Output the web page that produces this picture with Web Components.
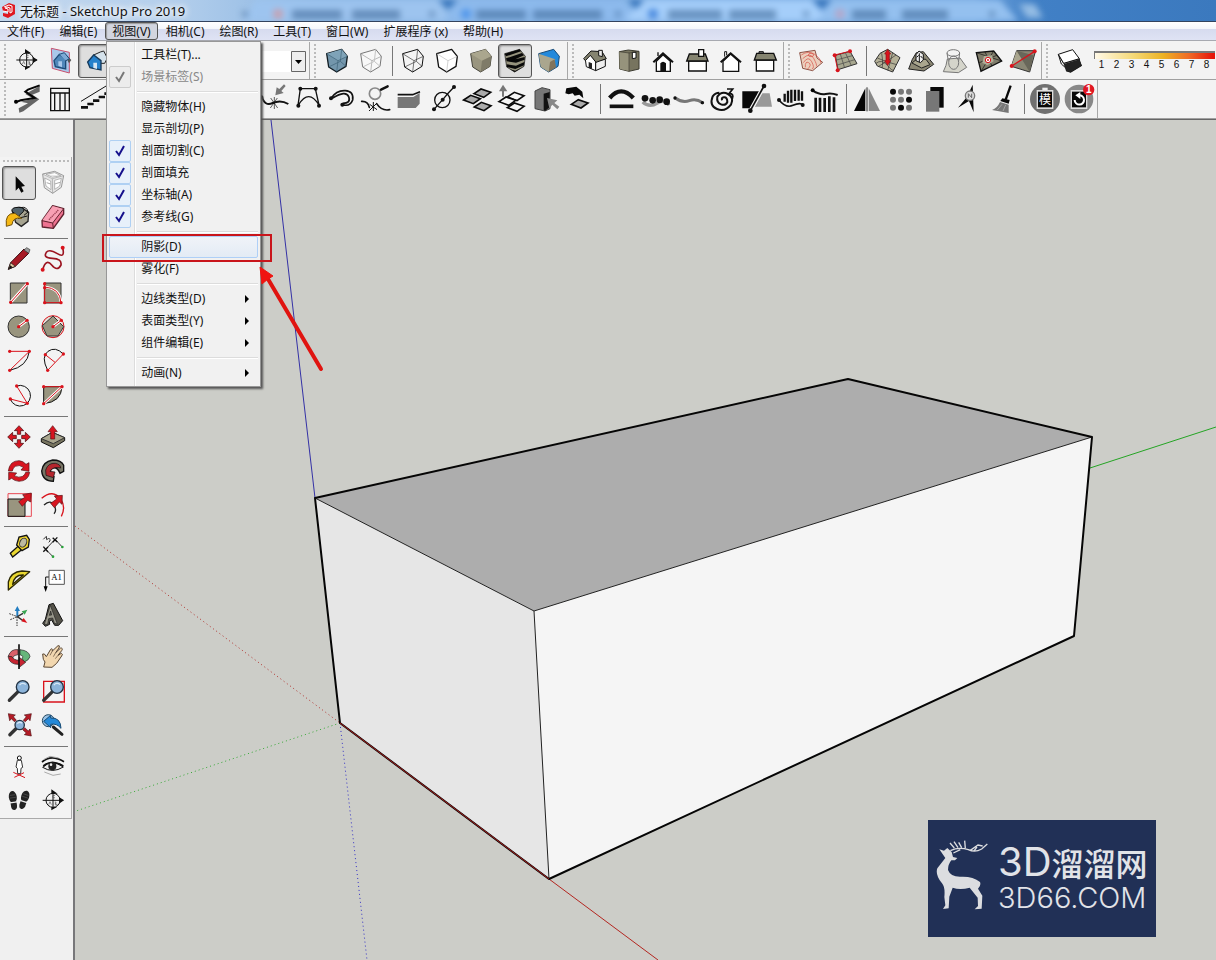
<!DOCTYPE html>
<html lang="zh-CN">
<head>
<meta charset="utf-8">
<meta name="viewport" content="width=device-width, initial-scale=1">
<title>无标题 - SketchUp Pro 2019</title>
<style>
html,body{height:100%}
body{margin:0;font:12px/18px "Noto Sans","Noto Sans CJK SC",sans-serif;color:#111;background:#f0f0f0}
</style>
</head>
<body>
<sketch-app></sketch-app>
<script>
/* ---------- icon library: [origin x, origin y, markup], each on a 102-unit square ---------- */
const K='stroke="#111" ', R='#d9131c', S='#99957f';
const dots=(pts,r=5,c=R)=>pts.map(p=>`<circle cx="${p[0]}" cy="${p[1]}" r="${r}" fill="${c}"/>`).join('');
const compass=(x,y)=>`<g fill="none" ${K} stroke-width="3"><circle cx="${x}" cy="${y}" r="21"/><path d="M${x-31} ${y}H${x+31}M${x} ${y-21}V${y+22}" stroke-width="3"/></g><path d="M${x-5} ${y-20}V${y-33}L${x+14} ${y-20}M${x+18} ${y-10} ${x+33} ${y} ${x+18} ${y+10}M${x-5} ${y+20}V${y+30}L${x+12} ${y+20}" fill="#111"/><path d="M${x-13} ${y+13}l4-9 4 9M${x+7} ${y+4}v10h6q-2-4-6-5q5-2 0-5M${x+6} ${y-14}q-7-3-7 3t7 3" fill="none" stroke="#555" stroke-width="2"/>`;
const shell='M20 29 65 16 82 37 78 67 50 84 26 69Z';
const edges='M20 29 54 50 82 37M54 50 50 84';
const hiddenEdges='M65 16 61 52 26 69M61 52 78 67';
const lens=(x,y,r)=>`<path d="M${x-r*.8} ${y+r*.8} ${x-r*2.1} ${y+r*2.1}" stroke="#333" stroke-width="10" stroke-linecap="round"/><circle cx="${x}" cy="${y}" r="${r}" fill="#8cb4da" stroke="#234" stroke-width="4"/><path d="M${x-r*.5} ${y-r*.3}q${r*.4}-${r*.5} ${r}-${r*.1}" stroke="#d7e8f6" stroke-width="4" fill="none"/>`;
const tile=(x,y,f='#aaa')=>`<path d="M${x-25} ${y+2} ${x-4} ${y-12} ${x+25} ${y-2} ${x+4} ${y+13}Z" fill="${f}" stroke="#0a0a0a" stroke-width="5"/>`;
const shoe=(x,y,a)=>`<g transform="translate(${x} ${y}) rotate(${a})"><ellipse cx="0" cy="-12" rx="12" ry="18" fill="#222"/><path d="M-9 3H9V16Q8 27 0 27T-9 16Z" fill="#222"/><path d="M-11 4H11" stroke="#eee" stroke-width="4"/><path d="M-8-18H8M-9-10H9" stroke="#555" stroke-width="2"/></g>`;
const mesh='M854 184 870 160 893 148 930 173 908 216 862 198Z';
const ICONS={
 section:[30,132,compass(80,180)],
 plane:[132,132,`<path d="M154 145 208 157V219L157 205Z" fill="#a9c8ea" stroke="#c8506e" stroke-width="3"/><path d="M193 163 202 168 214 180 207 190Z" fill="#555"/><path d="M162 182 178 163 197 176V207L166 200Z" fill="#4f87ba" stroke="#1b4a76" stroke-width="4"/><path d="M178 163 193 158 208 176 198 182" fill="#7daad6" stroke="#1b4a76" stroke-width="3"/><path d="M175 197V184H186V202" fill="#a9c8ea"/>`],
 cut:[234,132,`<path d="M281 165 301 156 311 153 322 174 314 190 301 190Z" fill="#d5e2eb" stroke="#222" stroke-width="3"/><path d="M263 186 281 165 303 182V210L270 203Z" fill="#2581cc" stroke="#153a5c" stroke-width="4"/><path d="M280 204V188H291V207" fill="#d5e6f4"/>`],
 fillcut:[0,0,`<path d="${shell}" fill="#ccc" ${K} stroke-width="3"/>`],
 xray:[0,0,`<path d="${shell}" fill="#7396ac" stroke="#111c22" stroke-width="4" stroke-linejoin="round"/><path d="M20 29 65 16 82 37 54 50Z" fill="#7fa3b8"/><path d="${edges}${hiddenEdges}" fill="none" stroke="#3d6075" stroke-width="2"/>`],
 back:[0,0,`<path d="${shell}" fill="#f8f8f8" stroke="#777" stroke-width="3" stroke-linejoin="round"/><path d="${edges}" fill="none" stroke="#999" stroke-width="2"/><path d="${hiddenEdges}" fill="none" stroke="#c4c4c4" stroke-width="3"/>`],
 wire:[0,0,`<path d="${shell}" fill="none" ${K} stroke-width="3"/><path d="${edges}${hiddenEdges}" fill="none" stroke="#333" stroke-width="2"/>`],
 hidden:[0,0,`<path d="${shell}" fill="#fff" ${K} stroke-width="4" stroke-linejoin="round"/><path d="${edges}" fill="none" stroke="#bbb" stroke-width="2"/>`],
 shaded:[0,0,`<path d="${shell}" fill="${S}" stroke="#45443b" stroke-width="3"/><path d="M20 29 65 16 82 37 54 50Z" fill="#aaa68e"/><path d="M54 50 82 37 78 67 50 84Z" fill="#7f7b68"/>`],
 textured:[0,0,`<path d="${shell}" fill="#96937d" stroke="#111" stroke-width="2"/><path d="M20 29 65 16 69 22 24 37ZM24 43 72 27 78 34 52 46 80 39 80 47 54 56 26 52ZM26 61 54 65 79 54 78 64 52 75 27 69ZM36 76 52 80 77 68 50 84Z" fill="#080808"/>`],
 mono:[0,0,`<path d="${shell}" fill="#2389db" stroke="#174a76" stroke-width="3"/><path d="M20 29 70 46 50 84 26 69Z" fill="#aaa68e"/><path d="M54 54 68 46 72 70 50 84Z" fill="#81745c"/>`],
 iso:[804,132,`<path d="M826 178 840 163 857 182V212L829 200Z" fill="#fff" ${K} stroke-width="3"/><path d="M857 182 886 178V199L857 212Z" fill="#eee" ${K} stroke-width="3"/><path d="M821 176 843 153 876 155 889 176 858 187 841 166 826 182Z" fill="#858470" ${K} stroke-width="3"/><path d="M866 167V151H877V170Z" fill="#eee" ${K} stroke-width="3"/><path d="M836 203V186L846 190V207Z" fill="#222"/>`],
 top:[66,132,`<path d="M88 155 115 150 147 154V207L117 214 89 207Z" fill="#77745f" stroke="#3c3b30" stroke-width="3"/><path d="M88 155 117 159V213L89 207Z" fill="#96937c"/><path d="M117 158V213M88 155 117 159 147 154" fill="none" stroke="#3c3b30" stroke-width="2"/><path d="M127 157H138V174L127 176Z" fill="#fff" ${K} stroke-width="3"/>`],
 front:[168,132,`<path d="M199 184V214H241V184L219 164Z" fill="#fff" ${K} stroke-width="4"/><path d="M190 187 219 160 249 187" fill="none" ${K} stroke-width="6"/><path d="M211 214V190Q219 180 228 190V214Z" fill="#111"/><path d="M204 157V168" ${K} stroke-width="4"/>`],
 right:[270,132,`<path d="M296 183H349V213H296Z" fill="#fff" ${K} stroke-width="4"/><path d="M298 162H346L354 183H290Z" fill="#858470" ${K} stroke-width="4"/><path d="M326 149H341V169H326Z" fill="#fff" ${K} stroke-width="4"/>`],
 rear:[372,132,`<path d="M399 184V214H446V184L422 162Z" fill="#fff" ${K} stroke-width="4"/><path d="M392 187 422 160 453 187" fill="none" ${K} stroke-width="6"/><path d="M404 170V155H410V166" fill="#fff" ${K} stroke-width="3"/>`],
 left:[474,132,`<path d="M499 180H551V213H499Z" fill="#fff" ${K} stroke-width="4"/><path d="M500 160H551L559 180H493Z" fill="#858470" ${K} stroke-width="4"/><path d="M507 155H520V160H507Z" fill="#777" ${K} stroke-width="3"/>`],
 contour:[612,132,`<path d="M629 158 675 151 681 174 698 187 668 212 638 205Z" fill="#ecd0be" stroke="#8d5245" stroke-width="3"/><g fill="none" stroke="#d54c42" stroke-width="2"><path d="M634 165Q655 150 674 163T692 188M638 176Q660 155 671 175T679 199M640 188Q655 166 665 185T666 207M646 202Q645 182 656 188T652 208"/><ellipse cx="663" cy="165" rx="8" ry="5"/></g>`],
 scratch:[714,132,`<path d="M736 166 780 154 801 191 744 209Z" fill="#a7a78f" stroke="#333" stroke-width="3"/><path d="M751 162 764 204M766 158 784 197M739 180 787 167M742 195 794 179" fill="none" stroke="#444" stroke-width="2"/><path d="M743 210 734 165 779 154" fill="none" stroke="${R}" stroke-width="3"/>`+dots([[734,166],[780,154],[743,211]],6)],
 smoove:[840,132,`<path d="${mesh}" fill="#b4b097" stroke="#333" stroke-width="3"/><path d="M858 190Q875 176 892 196T912 210M862 174Q888 186 920 194M875 160Q880 190 876 204M908 158Q900 190 893 211M918 165Q890 185 866 199" fill="none" stroke="#333" stroke-width="2"/><path d="M893 148 902 162H898V182H902L893 196 884 182H888V162H884Z" fill="${R}" stroke="#8d1016" stroke-width="2"/>`],
 stamp:[12,132,`<path d="M37 178 49 158 70 155 101 193 72 213 26 207Z" fill="#8d8975" stroke="#222" stroke-width="3"/><path d="M36 189 52 176 78 178 90 194 65 204Z" fill="#aaa68e" stroke="#222" stroke-width="3"/><path d="M48 182V164L57 153 70 163V180L61 188Z" fill="#eee" ${K} stroke-width="3"/><path d="M58 160V186M50 172l6-6M62 168l6 7" ${K} stroke-width="3"/>`],
 drape:[114,132,`<path d="M142 177 180 174 200 202 175 218 130 215 138 196Z" fill="#d5d5cb" stroke="#777" stroke-width="3"/><g fill="none" stroke="#777" stroke-width="3"><ellipse cx="160" cy="159" rx="19" ry="10"/><path d="M141 160 145 182M179 160 176 182"/><ellipse cx="161" cy="188" rx="15" ry="20"/></g>`],
 detail:[216,132,`<path d="M229 158 281 153 305 183 243 214Z" fill="#807d6b" ${K} stroke-width="4"/><path d="M229 158 305 183M281 153 243 214M238 188 290 166M255 156 276 198" fill="none" ${K} stroke-width="2"/><path d="M252 168 276 166 281 184 262 196 247 188Z" fill="#b1ad97"/><circle cx="264" cy="180" r="8" fill="#fff" stroke="${R}" stroke-width="3"/><circle cx="264" cy="180" r="3" fill="${R}"/>`],
 flip:[318,132,`<path d="M350 152 407 152 389 216 334 199Z" fill="#8a8775" stroke="#333" stroke-width="3"/><path d="M350 152 366 178 334 199Z" fill="#aaa68e"/><path d="M350 152 389 216 400 166 Z" fill="#69675a"/><path d="M335 198 404 154" stroke="${R}" stroke-width="4"/>`+dots([[335,198],[404,154]],6)],
 shadow:[456,132,`<path d="M500 200 540 184 546 197 512 218 498 214Z" fill="#111"/><path d="M475 163 491 190 538 177 540 190 500 206 484 192Z" fill="#fff" ${K} stroke-width="3"/><path d="M475 163 518 149 538 176 491 190Z" fill="#fff" ${K} stroke-width="3"/><path d="M491 192 538 178 545 197 512 217 498 213Z" fill="#222"/>`],
 curve1:[30,246,`<path d="M62 305 100 296 76 282 119 258V275L97 284 118 298 70 334 58 338 56 325 84 310Z" fill="#666"/><path d="M46 307 62 301 104 294 76 275 84 269 119 256" fill="none" stroke="#050505" stroke-width="6"/><circle cx="48" cy="305" r="6"/>`],
 columns:[132,246,`<path d="M152 265H208V332H152ZM152 279H208M164 279V332M180 279V332M195 279V332" fill="none" ${K} stroke-width="4"/>`],
 stairs:[234,246,`<path d="M243 304 320 257" ${K} stroke-width="3"/><path d="M243 322H264M262 312H281M279 302H298M296 291H315M313 281H330" fill="none" ${K} stroke-width="8"/>`],
 arcs:[0,0,`<path d="M16 70Q50 5 86 70" fill="none" ${K} stroke-width="6"/>`],
 weld:[768,246,`<path d="M786 290Q794 320 818 309T865 312" fill="none" ${K} stroke-width="6"/><circle cx="785" cy="291" r="5"/><path d="M812 294 833 324M832 294 811 324M823 291V327" ${K} stroke-width="2"/><path d="M826 286 830 262 838 267 852 253 857 258 844 273 851 279Z" fill="#777"/>`],
 arch:[-60,246,`<path d="M-36 316-29 266H16L27 315M-34 314Q-4 265 27 315" fill="none" ${K} stroke-width="4"/>`+dots([[-35,317],[-29,266],[17,266],[27,317]],6,'#111')],
 hook:[42,246,`<path d="M63 295Q80 270 106 272T128 300Q120 321 97 314M68 294Q108 270 116 290T98 310" fill="none" ${K} stroke-width="5"/>`+dots([[63,295],[97,314]],6,'#111')],
 join:[144,246,`<circle cx="195" cy="281" r="17" fill="none" stroke="#888" stroke-width="5"/><path d="M213 269 233 259" stroke="#111" stroke-width="7" stroke-linecap="round"/><path d="M155 304Q174 303 178 322M200 311Q215 334 239 329" fill="none" ${K} stroke-width="5" stroke-linecap="round"/><path d="M190 306V333M179 313 201 329M201 309 177 333" stroke="#111" stroke-width="3"/>`],
 slab:[246,246,`<path d="M263 291H310L329 279V311L317 324H263Z" fill="#777"/><path d="M263 284H308L330 275" fill="none" ${K} stroke-width="5"/>`],
 pivot:[348,246,`<circle cx="397" cy="300" r="23" fill="none" ${K} stroke-width="4"/><path d="M372 328 398 299 415 279 432 261" fill="none" ${K} stroke-width="4"/>`+dots([[372,328],[398,299],[432,261]],6,'#111')],
 tiles:[450,246,tile(517,279)+tile(486,298)+tile(518,319)],
 tilesup:[552,246,tile(617,289,'#f5f5f5')+tile(592,303,'#f5f5f5')+tile(617,321,'#f5f5f5')+`<path d="M579 290V268" stroke="#777" stroke-width="6"/><path d="M567 274 579 254 592 274Z" fill="#777"/>`],
 box:[654,246,`<path d="M675 273 696 263 720 269V326L705 333 675 326Z" fill="#777" stroke="#444" stroke-width="3"/><path d="M701 281 719 276V322L705 333 701 330Z" fill="#111"/><path d="M748 320 733 309 742 301 711 294 718 325 727 314 742 328Z" fill="#888"/>`],
 drop:[756,246,`<path d="M766 280 769 265 799 260 817 275 820 295 808 284 794 287 788 280 776 283Z" fill="#080808"/>${tile(809,311)}`],
 dome:[42,246,`<path d="M59 294Q93 254 130 294" fill="none" ${K} stroke-width="13"/><path d="M59 319H130" ${K} stroke-width="11"/>`],
 beads:[144,246,`<path d="M158 306Q178 324 202 309T237 316" fill="none" stroke="#999" stroke-width="10"/>`+dots([[165,295],[188,301],[209,299],[230,305]],10,'#111')],
 worm:[246,246,`<path d="M256 294Q278 310 298 302T338 308" fill="none" stroke="#777" stroke-width="9" stroke-linecap="round"/>`+dots([[255,294],[337,308]],5,'#111')],
 spiral:[348,246,`<path d="M397 301Q392 293 402 292T412 306Q407 318 393 313T382 290Q395 272 414 282T423 314Q405 337 381 327T368 289Q376 278 388 278" fill="none" ${K} stroke-width="6"/><path d="M411 267H428L417 281Q433 280 427 296" fill="none" ${K} stroke-width="5"/>`],
 mirrorcut:[450,246,`<path d="M457 274H510L480 325H457Z" fill="#080808"/><path d="M516 280H539L546 320H494Z" fill="#999"/><path d="M481 332 522 258" stroke="#f3f3f3" stroke-width="12"/><path d="M481 332 522 258" ${K} stroke-width="5"/>`+dots([[481,332],[522,258]],7,'#111')],
 comb:[552,246,`<path d="M584 281V305M594 272V308M604 269V308M615 269V303M626 269V302M636 274V302" ${K} stroke-width="7"/><path d="M567 300Q588 326 609 316T641 315" fill="none" ${K} stroke-width="5"/>`+dots([[567,300],[638,315]],6,'#111')],
 fence:[654,246,`<path d="M668 272Q691 286 707 282T743 285" fill="none" ${K} stroke-width="6"/><path d="M677 293V336M690 293V336M704 294V336M718 289V336M732 292V336" ${K} stroke-width="8"/><circle cx="668" cy="271" r="6"/>`],
 mirror:[780,246,`<path d="M792 333 826 265V333Z" fill="#050505"/><path d="M836 265 870 333H836Z" fill="#888"/><path d="M831 262V334" stroke="#222" stroke-width="3"/>`],
 array:[882,246,[0,1,2].map(r=>[0,1,2].map(c=>`<circle cx="${909+c*24}" cy="${275+r*24}" r="9" fill="${[[1,0,0],[0,0,1],[0,1,0]][r][c]?'#080808':'#777'}"/>`).join('')).join('')],
 pages:[54,246,`<path d="M91 261H131V323H91Z" fill="#080808"/><path d="M78 273H118V335H78Z" fill="#777"/>`],
 north:[156,246,`<path d="M218 254 221 337 207 303 174 323 200 292Z" fill="#080808"/><circle cx="210" cy="287" r="14" fill="#ddd" stroke="#777" stroke-width="4"/><path d="M205 293V281L215 293V281" fill="none" stroke="#666" stroke-width="3"/>`],
 broom:[258,246,`<path d="M332 257 317 299" stroke="#080808" stroke-width="7"/><path d="M307 295 329 300 326 311 301 303Z" fill="#080808"/><path d="M300 306 326 314V339L276 330Q292 324 300 306Z" fill="#777"/><path d="M292 330 306 313M309 333 317 315" stroke="#bbb" stroke-width="2"/>`],
 lib:[384,246,`<circle cx="435" cy="297" r="45" fill="#707070"/><rect x="410" y="270" width="50" height="57" fill="#ddd"/><rect x="427" y="263" width="16" height="8" fill="#eee"/><rect x="414" y="275" width="42" height="47" fill="#080808"/><text x="435" y="311" text-anchor="middle" font-size="36" fill="#fff" font-family="Noto Sans CJK SC">模</text>`],
 sync:[486,246,`<circle cx="537" cy="297" r="43" fill="#888"/><rect x="512" y="270" width="50" height="57" fill="#ddd"/><rect x="516" y="275" width="42" height="47" fill="#080808"/><path d="M524 300A14 14 0 1 0 536 286" fill="none" stroke="#fff" stroke-width="6"/><path d="M541 276V297L526 286Z" fill="#fff"/><circle cx="566" cy="269" r="17" fill="#e01722"/><text x="566" y="280" text-anchor="middle" font-size="30" font-weight="bold" fill="#fff" font-family="Liberation Sans">1</text>`],
 select:[6,48,`<path d="M47 79V122L56 113 64 128 71 124 64 110 75 108Z" fill="#080808"/>`],
 component:[108,48,`<path d="M128 72 164 64 191 77 184 112 158 130 133 113Z" fill="#e6e6e6" stroke="#999" stroke-width="3"/><path d="M128 72 157 86 191 77M157 86 158 130M134 84 152 93 153 119 138 108ZM164 91 184 85 179 108 164 118ZM138 73 164 68 182 77 157 82Z" fill="#fff" stroke="#999" stroke-width="2"/><path d="M140 98 152 102M164 102 180 97" stroke="#aaa" stroke-width="3"/>`],
 paint:[6,150,`<path d="M37 183Q48 169 65 173L86 187 84 214 64 229 47 217Z" fill="#a6a491" stroke="#222" stroke-width="4"/><path d="M36 184Q33 172 55 172T70 185L55 199Z" fill="#53636a" ${K} stroke-width="3"/><path d="M62 173Q80 168 84 186L72 196M54 205 82 198" fill="none" ${K} stroke-width="3"/><path d="M19 229Q14 188 45 190L65 205Q38 200 36 224Z" fill="#f5b814" stroke="#76540c" stroke-width="3"/>`],
 eraser:[108,150,`<path d="M126 212 158 167 191 176V192L160 235 127 231Z" fill="#ee7391" stroke="#60222e" stroke-width="4" stroke-linejoin="round"/><path d="M127 211 158 168 190 177 158 219Z" fill="#f8a0b4"/><path d="M126 212 158 219 191 176M158 219 160 235" fill="none" stroke="#60222e" stroke-width="3"/><path d="M147 209 175 180" stroke="#9e4257" stroke-width="4" stroke-dasharray="4 2"/>`],
 pencil:[6,276,`<path d="M25 358 32 338 72 297 86 310 46 349Z" fill="#a71a25" stroke="#3a0a0e" stroke-width="3"/><path d="M25 358 32 338 46 349Z" fill="#e0c8a0" ${K} stroke-width="2"/><path d="M72 300 80 293 90 299 86 310Z" fill="#999" stroke="#333" stroke-width="2"/><path d="M25 358 31 346 38 352Z" fill="#111"/>`],
 freehand:[108,276,`<path d="M128 359Q138 324 155 345T183 345Q186 326 157 325T139 307Q148 296 172 311T188 294" fill="none" stroke="#9c1420" stroke-width="5"/>`+dots([[128,359],[188,293]],6)],
 line:[6,378,`<path d="M31 399H81V459H31Z" fill="${S}" stroke="#333" stroke-width="3"/><path d="M32 457 82 401" stroke="#fff" stroke-width="9"/><path d="M32 457 82 401" stroke="${R}" stroke-width="3"/>`+dots([[32,457],[82,401]])],
 rect:[108,378,`<path d="M133 399H183V459H133Z" fill="${S}" stroke="#333" stroke-width="3"/><path d="M134 411Q180 414 183 458" fill="none" stroke="#fff" stroke-width="8"/><path d="M134 401V458H183Q180 414 134 411" fill="none" stroke="${R}" stroke-width="3"/>`+dots([[134,401],[134,413],[134,458],[183,458]])],
 circle:[6,480,`<circle cx="56" cy="530" r="32" fill="${S}" stroke="#333" stroke-width="3"/><path d="M56 530 81 511" stroke="#fff" stroke-width="9"/><path d="M56 530 81 511" stroke="${R}" stroke-width="3"/>`+dots([[56,530],[81,511]])],
 polygon:[108,480,`<circle cx="159" cy="530" r="33" fill="#e6ded6" stroke="${R}" stroke-width="3"/><path d="M127 527 159 498 191 530 174 558H141Z" fill="${S}" stroke="#333" stroke-width="3"/><path d="M159 530 184 511" stroke="#fff" stroke-width="9"/><path d="M159 530 184 511" stroke="${R}" stroke-width="3"/>`+dots([[159,530],[184,511]])],
 arc:[6,582,`<path d="M29 661Q82 650 88 604" fill="none" ${K} stroke-width="3"/><path d="M29 604H88L29 661" fill="none" stroke="${R}" stroke-width="3"/>`+dots([[29,604],[88,604],[29,661]])],
 arc2:[108,582,`<path d="M143 661Q122 620 144 604T190 612" fill="none" ${K} stroke-width="3"/><path d="M136 614 165 637M190 612 143 661" fill="none" stroke="${R}" stroke-width="3"/>`+dots([[136,614],[190,612],[143,661]])],
 arc3:[6,684,`<path d="M50 708A31 31 0 1 1 31 747" fill="none" ${K} stroke-width="3"/><path d="M50 708 82 760 31 747" fill="none" stroke="${R}" stroke-width="3"/>`+dots([[50,708],[82,760],[31,747]])],
 pie:[108,684,`<path d="M131 710H186Q184 756 131 761Z" fill="${S}" ${K} stroke-width="3"/><path d="M131 761 186 710" stroke="#fff" stroke-width="8"/><path d="M131 710H186L131 761" fill="none" stroke="${R}" stroke-width="3"/>`+dots([[131,710],[186,710],[131,761]])],
 move:[6,30,`<g fill="#d71520" stroke="#3a0a0c" stroke-width="2"><path d="M57 47 71 62H62V73H52V62H43Z"/><path d="M57 115 71 100H62V89H52V100H43Z"/><path d="M23 81 38 67V76H49V86H38V95Z"/><path d="M91 81 76 67V76H65V86H76V95Z"/></g>`],
 push:[108,30,`<path d="M124 86 157 67 194 83 194 92 160 113 124 96Z" fill="#77745f" ${K} stroke-width="3"/><path d="M124 86 157 67 194 83 160 101Z" fill="#aaa68e" stroke="#333" stroke-width="3"/><path d="M158 47 172 65H164V87H152V65H144Z" fill="#d71520" stroke="#5b1014" stroke-width="2"/>`],
 rotate:[6,132,`<g fill="#d71520" stroke="#521013" stroke-width="2"><path d="M25 183Q29 152 57 152 70 153 78 163L87 158V184L63 180 70 172Q58 163 46 169 38 174 37 183Z"/><path d="M89 187Q85 213 57 214 43 213 35 205L26 210V187L50 189 43 197Q57 205 68 199 76 194 77 187Z"/></g>`],
 follow:[108,132,`<path d="M125 183Q128 155 158 150 184 150 191 166V184L180 190Q172 170 158 174 148 180 152 193L162 200 160 214Q128 214 125 183Z" fill="#777565" ${K} stroke-width="4"/><path d="M137 180Q144 158 166 160 182 163 182 174 160 168 150 184L165 186 160 203 138 196Z" fill="#b5262d" ${K} stroke-width="2"/>`],
 scale:[6,234,`<path d="M24 251H94V319H24Z" fill="#f4f4f4" stroke="#e84852" stroke-width="3"/><path d="M24 267H75V319H24Z" fill="${S}" ${K} stroke-width="3"/><path d="M56 275 74 262 68 254 94 249 92 276 83 271 67 289Z" fill="#d71520" stroke="#521013" stroke-width="2"/>`],
 offset:[108,234,`<path d="M125 265Q158 236 183 268 198 292 184 319" fill="none" stroke="${R}" stroke-width="4"/><path d="M132 285Q153 266 164 289 170 304 162 311" fill="none" stroke="#222" stroke-width="4"/><path d="M152 280 170 267 163 258 187 256 186 283 178 276 163 293Z" fill="#d71520" stroke="#521013" stroke-width="2"/>`],
 tape:[6,360,`<path d="M31 430 54 409 65 419 38 441Z" fill="#ead830" ${K} stroke-width="4"/><path d="M50 405 57 381 80 376 88 388 85 411 66 422Z" fill="#f1d62e" ${K} stroke-width="4"/><ellipse cx="70" cy="398" rx="10" ry="14" transform="rotate(25 70 397)" fill="#bcb9a0" stroke="#333" stroke-width="3"/>`],
 dim:[108,360,`<path d="M137 418 165 388 186 410M137 418 159 440" fill="none" stroke="#333" stroke-width="3"/><path d="M158 383 172 396M172 382 158 397M130 410 144 426M144 411 130 425" ${K} stroke-width="4"/><path d="M130 388 139 379 140 389Q151 380 150 393L146 397" fill="none" stroke="#333" stroke-width="3"/>`+dots([[187,411],[159,440]],4,'#28a13a')],
 protractor:[6,462,`<path d="M25 540V516Q32 486 66 483L89 485ZM38 523 70 495Q42 494 38 523Z" fill="#ead830" fill-rule="evenodd" stroke="#2c2806" stroke-width="4" stroke-linejoin="round"/>`],
 text:[108,462,`<path d="M147 501H137V535" fill="none" ${K} stroke-width="3"/><path d="M131 529H143L137 546Z"/><path d="M147 481H193V523H147Z" fill="#fff" stroke="#555" stroke-width="3"/><text x="170" y="511" text-anchor="middle" font-size="26" font-family="Liberation Serif">A1</text>`],
 axes:[6,564,`<path d="M52 620V601" stroke="#237ec2" stroke-width="6"/><path d="M44 603 52 588 60 603Z" fill="#237ec2"/><path d="M52 620 69 610M52 620 69 632" stroke="#333" stroke-width="4"/><path d="M65 604 82 599 74 614Z" fill="#39a451"/><path d="M64 634 82 639 71 624Z" fill="${R}"/><path d="M28 611 52 620M31 629 52 620M51 620V648" stroke="#333" stroke-width="3" stroke-dasharray="5 3"/>`],
 text3d:[108,564,`<path d="M128 640 136 628 147 584 160 580 188 632 176 646 164 646 155 630 148 634 149 643 136 649Z" fill="#55534a" ${K} stroke-width="3" stroke-linejoin="round"/><path d="M133 643 151 586 172 642 163 640 158 624 146 626 143 643ZM148 616 155 615 152 603Z" fill="#99978a" fill-rule="evenodd" stroke="#222" stroke-width="2"/>`],
 orbit:[6,30,`<path d="M25 78Q33 56 54 59V74Q40 75 38 84Z" fill="#d9606a" stroke="#222" stroke-width="2"/><path d="M60 59Q88 62 90 80 86 92 72 96L66 84Q74 80 60 74Z" fill="#66b67b" stroke="#222" stroke-width="2"/><path d="M24 79Q28 105 58 103V112L77 97 58 82V91Q40 90 36 80Z" fill="#c72532" stroke="#222" stroke-width="2"/><path d="M57 43V117" ${K} stroke-width="5"/>`],
 pan:[108,30,`<path d="M131 111 135 96 130 88 128 72Q133 68 139 80L152 58Q158 53 157 63L174 47Q181 45 177 54L167 68 182 54Q190 54 185 62L174 76 184 70Q190 72 185 78L170 100 156 112Z" fill="#f2d7af" stroke="#594633" stroke-width="3" stroke-linejoin="round"/><path d="M157 63 150 76M167 68 160 80M174 76 166 86" stroke="#594633" stroke-width="2"/>`],
 zoom:[6,132,lens(68,171,19)],
 zoomwin:[108,132,`<path d="M131 154H193V216H131Z" fill="none" stroke="${R}" stroke-width="4"/>`+lens(171,171,19)],
 extents:[6,234,lens(59,285,14)+`<g fill="#b51b26" stroke="#511014" stroke-width="2"><path d="M25 251 46 255 40 260 49 271 43 275 34 266 29 272Z"/><path d="M94 251 73 255 79 260 70 271 76 275 85 266 90 272Z"/><path d="M94 318 90 297 85 303 74 293 68 299 79 309 73 314Z"/></g>`],
 prev:[108,234,`<circle cx="145" cy="272" r="18" fill="#9bc3e5" stroke="#244962" stroke-width="3"/><path d="M160 291 186 313" stroke="#222" stroke-width="9" stroke-linecap="round"/><path d="M131 274 152 256V264Q182 262 183 295 170 279 152 283V293Z" fill="#2589d8" stroke="#174b75" stroke-width="3"/>`],
 camera:[6,360,`<circle cx="58" cy="384" r="6" fill="#fff" ${K} stroke-width="3"/><path d="M52 391H64L68 412 63 415 62 431H53L52 415 48 411Z" fill="#fff" stroke="#333" stroke-width="3"/><path d="M40 427 75 443M72 428 43 442" stroke="${R}" stroke-width="3"/>`],
 look:[108,360,`<path d="M126 396Q154 372 192 395" fill="none" ${K} stroke-width="5"/><path d="M128 412Q155 386 190 411 158 431 128 412Z" fill="#eee" ${K} stroke-width="3"/><path d="M130 408Q155 386 190 408" fill="none" ${K} stroke-width="5"/><circle cx="157" cy="409" r="12" fill="#222"/><circle cx="153" cy="404" r="4" fill="#eee"/><path d="M133 426 159 436 182 432M132 388 150 379 176 384" fill="none" stroke="#aaa" stroke-width="3"/>`],
 walk:[6,462,shoe(40,513,-8)+shoe(72,511,18)],
 section2:[108,462,compass(159,511)]
};

class ToolButton extends HTMLElement{
 constructor(){super();this.attachShadow({mode:'open'})}
 connectedCallback(){
  const [x,y,art]=ICONS[this.getAttribute('icon')];
  this.shadowRoot.innerHTML=`<style>
  :host{display:block;flex:none;width:34px;height:34px}
  button{display:block;width:34px;height:34px;padding:0;border:1px solid transparent;border-radius:3px;background:none}
  :host([pressed]) button{border-color:#555;background:#dedede;box-shadow:inset 1px 1px 2px #888}
  svg{display:block;width:34px;height:34px;margin:-1px}
  </style><button type="button" aria-label="${this.getAttribute('icon')}"><svg viewBox="${x} ${y} 102 102" aria-hidden="true">${art}</svg></button>`;
 }
}
customElements.define('tool-button',ToolButton);

class ToolGroup extends HTMLElement{
 constructor(){super();this.attachShadow({mode:'open'}).innerHTML=`<style>
 :host{display:flex;flex:none;align-items:center;box-sizing:border-box;height:38px;padding-right:1px;border-right:1px solid #a8a8a8}
 :host([last]){flex:1;border:0;overflow:hidden}
 i{width:2px;height:34px;margin:0 4px;background:repeating-linear-gradient(#bbb 0 2px,transparent 2px 4px)}
 </style><i></i><slot></slot>`}
}
customElements.define('tool-group',ToolGroup);

class ToolSeparator extends HTMLElement{
 constructor(){super();this.attachShadow({mode:'open'}).innerHTML=`<style>
 :host{display:flex;flex:none;justify-content:center;width:8px;height:30px}
 i{width:1px;background:#777}
 :host([wide]){width:auto;height:8px;grid-column:1/-1;align-items:center;padding:0 2px}
 :host([wide]) i{width:100%;height:1px}
 </style><i></i>`}
}
customElements.define('tool-separator',ToolSeparator);

class StyleCombo extends HTMLElement{
 constructor(){super();this.attachShadow({mode:'open'}).innerHTML=`<style>
 :host{display:block;flex:none;position:relative;width:152px;height:21px;margin-right:2px}
 select{appearance:none;width:100%;height:21px;border:0;background:#fff;border-radius:0}
 svg{position:absolute;right:0;top:0;pointer-events:none}
 </style><select aria-label="图层"><option></option></select><svg width="15" height="21"><path d="M.5 .5H14.500V20.500H.5Z" fill="#eee" stroke="#666"/><path d="M4 9H11L7.500 13Z"/></svg>`}
}
customElements.define('style-combo',StyleCombo);

class MonthScale extends HTMLElement{
 constructor(){super();this.attachShadow({mode:'open'}).innerHTML=`<style>
 :host{display:block;flex:1;min-width:0;margin-left:8px;overflow:hidden}
 .bar{height:6px;border:solid #777;border-width:2px 0 0 1px;background:linear-gradient(90deg,#fff9e8 0,#f5d978 38px,#edb324 68px,#f06a25 94px,#e6150b 118px)}
 .n{display:flex;font:10px/12px "Liberation Sans",sans-serif}
 span{flex:none;width:15px;text-align:center}
 </style><div class="bar"></div><div class="n">${[1,2,3,4,5,6,7,8].map(n=>`<span>${n}</span>`).join('')}</div>`}
}
customElements.define('month-scale',MonthScale);

class TitleBar extends HTMLElement{
 constructor(){super();this.attachShadow({mode:'open'}).innerHTML=`<style>
 :host{display:flex;align-items:center;position:relative;height:21px;overflow:hidden;gap:5px;padding-left:2px;background:linear-gradient(90deg,#c4d8ee,#b4cfec 14%,#8db7e3 26%,#82b0e2 50%,#76a9e0 80%,#4180c6 85%,#3b79be)}
 .glass{position:absolute;inset:0;width:100%;height:21px;filter:blur(3px)}
 .logo{position:relative;flex:none}
 b{position:relative;font:400 13px/18px "Noto Sans","Noto Sans CJK SC",sans-serif;text-shadow:0 0 5px #fff,0 0 8px #fff,0 0 10px #fff}
 </style>
 <svg class="glass" viewBox="0 0 1216 21" preserveAspectRatio="none"><path d="M255 0H440L450 21H245Z" fill="#9dc4ef"/><path d="M455 0H625L640 21H445Z" fill="#8dbaed"/><path d="M640 0H812L830 21H625Z" fill="#a5ceFA"/><path d="M830 0H1000L1018 21H818Z" fill="#94c0ef"/><path d="M438 0H458L448 9ZM628 0H644L636 9ZM812 0H832L822 9Z" fill="#2d6db6"/><g fill="#3d6797" opacity=".6"><path d="M292 10H342V19H292ZM352 10H400V19H352ZM476 10H526V19H476ZM533 10H602V19H533ZM668 10H722V19H668ZM729 10H776V19H729ZM852 10H886V19H852ZM902 10H948V19H902Z"/><circle cx="245" cy="14" r="3"/><circle cx="432" cy="14" r="3"/><circle cx="618" cy="14" r="3"/><circle cx="806" cy="14" r="3"/><circle cx="992" cy="14" r="3"/></g><circle cx="278" cy="14" r="5" fill="#c99fae"/><circle cx="840" cy="14" r="5" fill="#b7a6c8"/><circle cx="466" cy="14" r="5" fill="#4d94ea"/><circle cx="653" cy="14" r="5" fill="#4485dc"/><path d="M1019 4H1035L1043 18H1027Z" fill="#94bce4"/></svg>
 <svg class="logo" width="13" height="15" viewBox="0 0 13 15"><path d="M0 4 7 0 13 2V11L6 15 1 13V10L6 11V9L1 8Z" fill="#df1820"/><path d="M2 4 7 2 10 3V9L8 10V5L5 4 3 5M1 8 6 9V6L3 5" fill="none" stroke="#fff"/></svg>
 <b><slot></slot></b>`}
}
customElements.define('title-bar',TitleBar);

class MenuBar extends HTMLElement{
 constructor(){super();this.attachShadow({mode:'open'}).innerHTML=`<style>
 :host{display:flex;align-items:stretch;gap:1px;box-sizing:border-box;height:20px;border-top:1px solid #33435e;border-bottom:1px solid #a7a9b0;background:linear-gradient(#fff 0,#f4f6fb 7px,#d6dbef 7px,#dfe3f4);position:relative;z-index:3}
 </style><slot></slot>`}
}
customElements.define('menu-bar',MenuBar);

class MenuHead extends HTMLElement{
 constructor(){super();this.attachShadow({mode:'open'}).innerHTML=`<style>
 :host{display:block;position:relative;flex:none}
 button{display:block;box-sizing:border-box;height:18px;padding:0 6px;border:1px solid transparent;border-radius:3px;background:none;color:inherit;font:12px/18px "Noto Sans","Noto Sans CJK SC",sans-serif;white-space:nowrap}
 :host([open]) button{border-color:#555;background:#d2d5df;box-shadow:inset 1px 1px 1px #999}
 </style><button type="button">${this.getAttribute('label')}</button><slot></slot>`}
}
customElements.define('menu-head',MenuHead);

class MenuPopup extends HTMLElement{
 constructor(){super();this.attachShadow({mode:'open'}).innerHTML=`<style>
 :host{display:block;position:absolute;left:1px;top:19px;box-sizing:border-box;width:155px;padding:2px;border:1px solid #979797;background:linear-gradient(90deg,#f1f1f1 27px,#dcdcdc 27px 28px,#fff 28px 29px,#f1f1f1 29px);box-shadow:2px 2px 2px #555}
 svg{position:absolute;left:-5px;top:190px;pointer-events:none}
 </style><slot></slot>
 <svg width="224" height="144" aria-hidden="true"><path d="M1 3H169V29H1Z" fill="none" stroke="#c9151b" stroke-width="2"/><path d="M219 137 166 47" stroke="#e01410" stroke-width="4" stroke-linecap="round"/><path d="M158 35 171 44 166 47 160 52Z" fill="#f01410" stroke="#f01410"/></svg>`}
}
customElements.define('menu-popup',MenuPopup);

class MenuEntry extends HTMLElement{
 constructor(){super();const c=this.hasAttribute('checked');this.attachShadow({mode:'open'}).innerHTML=`<style>
 :host{display:block}
 button{display:flex;align-items:center;box-sizing:border-box;width:100%;height:22px;padding:0;border:1px solid transparent;border-radius:2px;background:none;color:inherit;text-align:left;font:12px/20px "Noto Sans","Noto Sans CJK SC",sans-serif;white-space:nowrap}
 :host([disabled]) button{color:#888}
 :host([hot]) button{border-color:#aecff7;background:linear-gradient(#f0f3f8,#e3ebf5)}
 .c{flex:none;box-sizing:border-box;width:22px;height:22px;margin:0 8px 0 -1px;border-radius:2px}
 .c.on{border:1px solid #afd0f3;background:#e7f0fa;color:#16108c}
 :host([disabled]) .c.on{border-color:#ccc;background:#ececec;color:#777}
 .c svg{display:block}
 .t{flex:1;padding-left:2px}
 .a{flex:none;margin-right:8px}
 </style><button type="button" role="${c?'menuitemcheckbox':'menuitem'}" ${c?'aria-checked="true"':''} ${this.hasAttribute('disabled')?'disabled':''}><span class="c ${c?'on':''}">${c?'<svg width="20" height="20"><path d="M6 10 9 14 14 5" fill="none" stroke="currentColor" stroke-width="2"/></svg>':''}</span><span class="t"><slot></slot></span>${this.hasAttribute('sub')?'<svg class="a" width="4" height="8"><path d="M0 0 4 4 0 8Z"/></svg>':''}</button>`}
}
customElements.define('menu-entry',MenuEntry);

class MenuRule extends HTMLElement{
 constructor(){super();this.attachShadow({mode:'open'}).innerHTML=`<style>:host{display:flex;align-items:center;height:8px;padding-left:28px;box-sizing:border-box}i{flex:1;height:1px;border-bottom:1px solid #fff;background:#dcdcdc}</style><i></i>`}
}
customElements.define('menu-rule',MenuRule);

class ToolPalette extends HTMLElement{
 constructor(){super();this.attachShadow({mode:'open'}).innerHTML=`<style>
 :host{display:block;box-sizing:border-box;width:72px;margin-top:37px;padding:3px 1px 0 2px;border-right:1px solid #aaa;border-bottom:1px solid #aaa;background:#f3f3f3}
 .grip{height:2px;margin:0 0 4px 1px;background:repeating-linear-gradient(90deg,#bbb 0 2px,transparent 2px 4px)}
 .grid{display:grid;grid-template-columns:34px 34px}
 </style><div class="grip"></div><div class="grid"><slot></slot></div>`}
}
customElements.define('tool-palette',ToolPalette);

class ModelView extends HTMLElement{
 constructor(){super();this.attachShadow({mode:'open'}).innerHTML=`<style>
 :host{display:block;flex:1;min-width:0;position:relative;overflow:hidden;background:#cccdc8;border-left:2px solid #77777a;border-top:1px solid #666}
 svg{position:absolute;inset:0;width:100%;height:100%}
 </style>
 <svg viewBox="75 120 1141 840" preserveAspectRatio="xMinYMin slice" fill="none">
 <path d="M315 498 848 379 1092 437 534 611Z" fill="#adadad"/><path d="M315 498 534 611 549 879 340 723Z" fill="#e6e6e6"/><path d="M534 611 1092 437 1074 636 549 879Z" fill="#f5f5f5"/>
 <path d="M271 120 315 498" stroke="#3431a6"/><path d="M340 723 367 960" stroke="#3431c6" stroke-dasharray="1 3"/>
 <path d="M75 526 340 723" stroke="#b1302c" stroke-dasharray="1 3"/><path d="M549 879 658 960" stroke="#b32620"/>
 <path d="M1090 468 1216 427" stroke="#24a424"/><path d="M340 723 76 811" stroke="#36a936" stroke-dasharray="1 3"/>
 <path d="M315 498 534 611 1092 437M534 611 549 879" stroke="#222"/>
 <path d="M340 723 315 498 848 379 1092 437 1074 636 549 879Z" stroke="#050505" stroke-width="2" stroke-linejoin="round"/><path d="M340 723 549 879" stroke="#a51c1a"/>
 </svg><slot></slot>`}
}
customElements.define('model-view',ModelView);

class BrandMark extends HTMLElement{
 constructor(){super();this.attachShadow({mode:'open'}).innerHTML=`<style>
 :host{display:flex;position:absolute;right:60px;bottom:23px;box-sizing:border-box;width:228px;height:117px;padding:20px 4px 0 8px;gap:10px;background:#213056;color:#e1e3e8}
 svg{flex:none}
 .w{display:flex;flex-direction:column;gap:4px}
 .a{display:flex;align-items:center;height:44px;font:500 32px/44px "Noto Sans CJK SC",sans-serif;white-space:nowrap}
 .a span{font:400 40px/44px Inter,sans-serif}
 .b{font:300 29px/20px Inter,sans-serif;white-space:nowrap}
 </style><svg width="52" height="72" viewBox="48 92 156 216"><path d="M58 120 72 124 82 116 95 128 99 143 112 146 105 153 94 153Q84 165 84 182 92 204 125 202 159 201 180 218 184 229 174 238L187 259 185 298 164 300 174 290 173 265 155 243 149 235Q120 243 98 235L88 262 86 297 69 299 76 288 73 263Q76 233 66 222 45 196 52 177L76 146Z" fill="#dcdde0"/><path d="M91 124Q116 112 145 121 165 131 185 119L202 104M103 116 90 101M114 115 102 97M125 115 116 99M136 117 134 94M151 123 174 107 188 110M161 126 171 113M100 131 121 121" fill="none" stroke="#dcdde0" stroke-width="4"/></svg><div class="w"><div class="a"><span>3D</span>溜溜网</div><div class="b">3D66.COM</div></div>`}
}
customElements.define('brand-mark',BrandMark);

const t=s=>s.split(' ').map(n=>n=='|'?'<tool-separator></tool-separator>':n=='-'?'<tool-separator wide></tool-separator>':n[0]=='*'?`<tool-button pressed icon="${n.slice(1)}"></tool-button>`:`<tool-button icon="${n}"></tool-button>`).join('');
class SketchApp extends HTMLElement{
 constructor(){super();this.attachShadow({mode:'open'}).innerHTML=`<style>
 :host{display:flex;flex-direction:column;min-height:100vh;overflow:hidden}
 .bar{display:flex;box-sizing:border-box;height:39px;border-bottom:1px solid #a0a0a0;background:#f3f3f3;overflow:hidden}
 .bar.first{padding-top:1px}
 .work{display:flex;flex:1;min-height:720px}
 aside{flex:none;width:73px;background:#f0f0f0;border-top:1px solid #888}
 </style>
 <title-bar>无标题 - SketchUp Pro 2019</title-bar>
 <menu-bar><menu-head label="文件(F)"></menu-head><menu-head label="编辑(E)"></menu-head><menu-head open label="视图(V)"><menu-popup>
 <menu-entry>工具栏(T)...</menu-entry><menu-entry checked disabled>场景标签(S)</menu-entry><menu-rule></menu-rule>
 <menu-entry>隐藏物体(H)</menu-entry><menu-entry>显示剖切(P)</menu-entry><menu-entry checked>剖面切割(C)</menu-entry><menu-entry checked>剖面填充</menu-entry><menu-entry checked>坐标轴(A)</menu-entry><menu-entry checked>参考线(G)</menu-entry><menu-rule></menu-rule>
 <menu-entry hot>阴影(D)</menu-entry><menu-entry>雾化(F)</menu-entry><menu-rule></menu-rule>
 <menu-entry sub>边线类型(D)</menu-entry><menu-entry sub>表面类型(Y)</menu-entry><menu-entry sub>组件编辑(E)</menu-entry><menu-rule></menu-rule>
 <menu-entry sub>动画(N)</menu-entry></menu-popup></menu-head><menu-head label="相机(C)"></menu-head><menu-head label="绘图(R)"></menu-head><menu-head label="工具(T)"></menu-head><menu-head label="窗口(W)"></menu-head><menu-head label="扩展程序 (x)"></menu-head><menu-head label="帮助(H)"></menu-head></menu-bar>
 <div class="bar first"><tool-group>${t('section plane *cut fillcut |')}<style-combo></style-combo></tool-group><tool-group>${t('xray back | wire hidden shaded *textured mono')}</tool-group><tool-group>${t('iso top front right rear left')}</tool-group><tool-group>${t('contour scratch | smoove stamp drape detail flip')}</tool-group><tool-group last>${t('shadow')}<month-scale></month-scale></tool-group></div>
 <div class="bar"><tool-group>${t('curve1 columns stairs arcs arcs arcs arcs | weld arch hook join slab pivot tiles tilesup box drop | dome beads worm spiral mirrorcut comb fence | mirror array pages north broom | lib sync')}</tool-group></div>
 <div class="work"><aside><tool-palette>${t('*select component paint eraser - pencil freehand line rect circle polygon arc arc2 arc3 pie - move push rotate follow scale offset - tape dim protractor text axes text3d - orbit pan zoom zoomwin extents prev - camera look walk section2')}</tool-palette></aside><model-view><brand-mark></brand-mark></model-view></div>`}
}
customElements.define('sketch-app',SketchApp);
</script>
</body>
</html>
